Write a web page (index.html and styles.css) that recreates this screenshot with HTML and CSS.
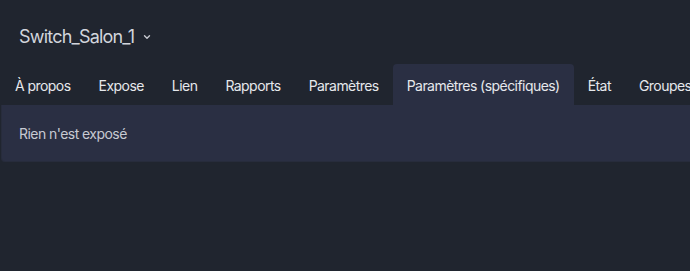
FILE: index.html
```html
<!DOCTYPE html>
<html lang="fr">
<head>
    <meta charset="UTF-8">
    <meta name="viewport" content="width=device-width, initial-scale=1.0">
    <title>Switch_Salon_1</title>
    <link rel="stylesheet" href="styles.css">
</head>
<body>
    <div class="page">
        <h2 class="device-title">
            Switch_Salon_1
            <svg class="chevron" width="8" height="6" viewBox="0 0 8 6" aria-hidden="true">
                <path d="M1.5 1.8 L4 4.3 L6.5 1.8" fill="none" stroke="currentColor" stroke-width="1.4" stroke-linecap="round" stroke-linejoin="round"/>
            </svg>
        </h2>

        <ul class="tabs">
            <li class="tab">À propos</li>
            <li class="tab">Expose</li>
            <li class="tab">Lien</li>
            <li class="tab">Rapports</li>
            <li class="tab">Paramètres</li>
            <li class="tab active">Paramètres (spécifiques)</li>
            <li class="tab">État</li>
            <li class="tab">Groupes</li>
        </ul>

        <div class="panel">
            Rien n'est exposé
        </div>
    </div>
</body>
</html>
```

FILE: styles.css
```css
body {
    font-family: Inter, "Noto Sans", sans-serif;
    margin: 0;
    background-color: #20252f;
    color: #e3e5ea;
    overflow: hidden;
}
.page {
    padding-left: 1px;
}
.device-title {
    display: flex;
    align-items: center;
    gap: 9px;
    margin: 0;
    padding: 8px 0 0 18px;
    height: 64px;
    font-size: 18px;
    font-weight: 400;
    letter-spacing: -0.8px;
    color: #d2d5dc;
    box-sizing: border-box;
}
.chevron {
    color: #c6c9d0;
    margin-top: 2px;
}
.tabs {
    display: flex;
    list-style: none;
    margin: 0;
    padding: 0;
    white-space: nowrap;
    overflow: hidden;
}
.tab {
    padding: 0 14px;
    height: 41px;
    line-height: 43px;
    font-size: 14px;
    letter-spacing: -0.55px;
    color: #e6e8ec;
    border-radius: 4px 4px 0 0;
    flex-shrink: 0;
}
.tab.active {
    background-color: #2a2f43;
}
.panel {
    background-color: #2a2f43;
    border: 1px solid #272c3c;
    border-top: none;
    border-radius: 0 0 4px 4px;
    height: 57px;
    box-sizing: border-box;
    padding: 0 17px;
    display: flex;
    align-items: center;
    font-size: 14px;
    letter-spacing: -0.55px;
    color: #c7cad2;
    width: 720px;
}
```
